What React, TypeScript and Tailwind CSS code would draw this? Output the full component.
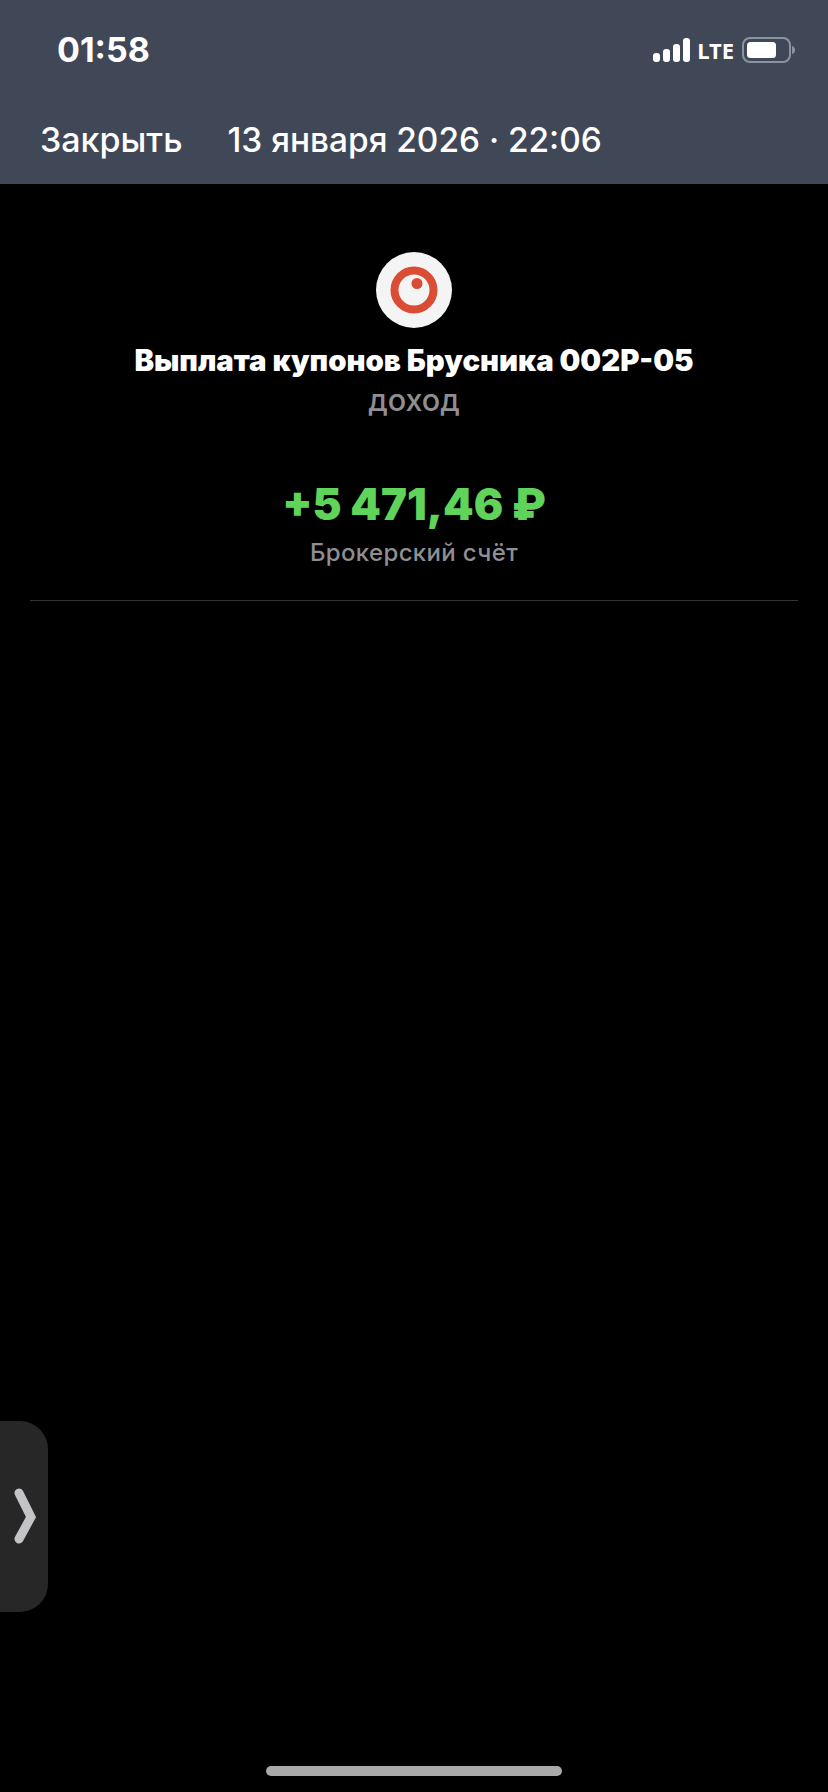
function StatusIcons() {
    return (
        <div className="flex items-center">
            <svg width="38" height="24" viewBox="0 0 38 24" fill="#ffffff">
                <rect x="0" y="15" width="7" height="9" rx="3" />
                <rect x="10" y="11" width="7" height="13" rx="3" />
                <rect x="20" y="6" width="7" height="18" rx="3" />
                <rect x="30" y="0" width="7" height="24" rx="3" />
            </svg>
            <span className="ml-[6px] text-[22px] leading-none font-bold text-white [font-family:'Noto_Sans',sans-serif]">LTE</span>
            <svg className="ml-[8px]" width="53" height="26" viewBox="0 0 53 26">
                <rect x="1" y="1" width="47" height="24" rx="7" fill="none" stroke="#8c93a0" strokeWidth="2" />
                <rect x="5" y="5" width="29" height="16" rx="3.5" fill="#ffffff" />
                <path d="M50 9c2 .6 3 2 3 4s-1 3.400-3 4z" fill="#8c93a0" />
            </svg>
        </div>
    );
}

function BrandLogo() {
    return (
        <div className="flex h-[76px] w-[76px] items-center justify-center rounded-full bg-[#f4f4f4]">
            <svg width="48" height="48" viewBox="0 0 48 48">
                <circle cx="24" cy="24" r="19.500" fill="none" stroke="#db4c34" strokeWidth="8" />
                <circle cx="27" cy="17.500" r="5.500" fill="#db4c34" />
            </svg>
        </div>
    );
}

export default function App() {
    return (
        <div className="relative min-h-[1792px] overflow-hidden bg-black font-['Inter',sans-serif] text-white">
            <header className="flex h-[184px] flex-col bg-[#404756]">
                <div className="flex h-[120px] items-start justify-between pl-[57px] pr-[33px] pt-[30px]">
                    <span className="text-[34px] leading-[40px] font-bold">01:58</span>
                    <div className="pt-[7px]">
                        <StatusIcons />
                    </div>
                </div>
                <div className="flex items-center pl-[40px] text-[34px] leading-[40px] font-medium">
                    <span>Закрыть</span>
                    <span className="ml-[45px] text-[33.4px]">13 января 2026 · 22:06</span>
                </div>
            </header>

            <main className="flex flex-col items-center px-[30px] pt-[68px]">
                <BrandLogo />
                <h1 className="mt-[13px] text-[29.3px] leading-[40px] font-black whitespace-nowrap">Выплата купонов Брусника 002P-05</h1>
                <p className="-mt-px text-[30.5px] leading-[40px] font-medium text-[#8e8e93]">доход</p>
                <p className="mt-[59px] text-[43.7px] leading-[52px] font-black text-[#5fd35a]">+5 471,46 ₽</p>
                <p className="mt-[6px] text-[24px] leading-[32px] font-medium tracking-[0.35px] text-[#8e8e93]">Брокерский счёт</p>
                <div className="mt-[31px] h-px w-full bg-[#333336]" />
            </main>

            <div className="absolute left-0 top-[1421px] flex h-[191px] w-[48px] items-center justify-end rounded-r-[28px] bg-[#272727] pr-[12px]">
                <svg width="22" height="58" viewBox="0 0 22 58" fill="none">
                    <path d="M5 5 L17 29 L5 51" stroke="#c4c4c6" strokeWidth="9" strokeLinecap="round" strokeLinejoin="miter" />
                </svg>
            </div>

            <div className="absolute bottom-[16px] left-[266px] h-[10px] w-[296px] rounded-full bg-[#a9a9a9]" />
        </div>
    );
}
